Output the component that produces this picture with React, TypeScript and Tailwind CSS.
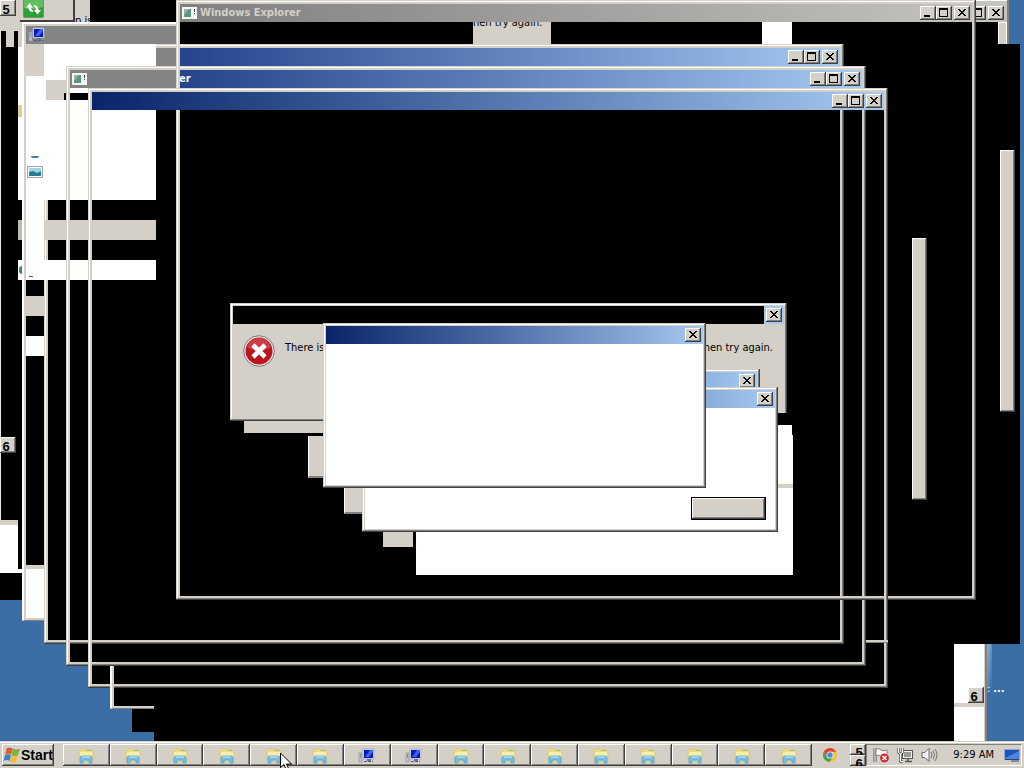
import type { ReactNode } from "react";

const raised =
  "bg-[#d4d0c8] shadow-[inset_-1px_-1px_#404040,inset_1px_1px_#ffffff,inset_-2px_-2px_#808080]";
const frame =
  "shadow-[inset_-1px_-1px_#404040,inset_1px_1px_#d4d0c8,inset_-2px_-2px_#808080,inset_2px_2px_#ffffff,inset_0_0_0_4px_#d4d0c8]";
const dialogFrame =
  "shadow-[inset_-1px_-1px_#404040,inset_1px_1px_#d4d0c8,inset_-2px_-2px_#808080,inset_2px_2px_#ffffff,inset_0_0_0_3px_#d4d0c8]";

function Patch({ className, children }: { className: string; children?: ReactNode }) {
  return <div className={`absolute ${className}`}>{children}</div>;
}

function CaptionButton({ kind }: { kind: "min" | "max" | "close" }) {
  const label = { min: "Minimize", max: "Maximize", close: "Close" }[kind];
  return (
    <button aria-label={label} className={`h-[14px] w-4 shrink-0 ${raised}`}>
      <svg viewBox="0 0 16 14" className="block h-[14px] w-4" shapeRendering="crispEdges" aria-hidden="true">
        {kind === "min" && <path d="M4 9h6v2H4z" fill="#000" />}
        {kind === "max" && <path d="M3 2h9v9H3zM4 4v6h7V4z" fill="#000" fillRule="evenodd" />}
        {kind === "close" && (
          <path
            d="M4 3h2v1h1v1h2V4h1V3h2v1h-1v1h-1v1H9v1h1v1h1v1h1v1h-2V9H9V8H7v1H6v1H4V9h1V8h1V7h1V6H6V5H5V4H4z"
            fill="#000"
          />
        )}
      </svg>
    </button>
  );
}

function CaptionButtons() {
  return (
    <div className="ml-auto flex items-center pr-[2px]">
      <CaptionButton kind="min" />
      <CaptionButton kind="max" />
      <div className="w-[2px]" />
      <CaptionButton kind="close" />
    </div>
  );
}

function AppIcon() {
  return (
    <svg viewBox="0 0 15 12" className="h-3 w-[15px] shrink-0" aria-hidden="true">
      <rect width="15" height="12" fill="#f4f6f4" />
      <rect x="2" y="2" width="7" height="8" fill="#5f9484" />
      <path d="M2 2h5L2 8z" fill="#8fb8a5" />
      <path d="M12.500 2v3M12 6.500h1" stroke="#444" />
    </svg>
  );
}

function ComputerIcon() {
  return (
    <svg viewBox="0 0 18 16" className="h-4 w-[18px] shrink-0" aria-hidden="true">
      <path d="M1 5h3v9H1z" fill="#c4cbd0" stroke="#8c969e" strokeWidth=".8" />
      <path d="M2 7h1M2 9h1" stroke="#48525c" />
      <rect x="5" y="1" width="11" height="10" fill="#d5dbe6" stroke="#a5abbb" strokeWidth=".8" />
      <rect x="6" y="2" width="9" height="8" fill="#0a18b8" />
      <path d="M7 9l5-7h3v2l-4 5z" fill="#3e62ee" />
      <path d="M9 11h4v2H9z" fill="#6b7580" />
      <path d="M6 13.500h9" stroke="#505a90" strokeDasharray="3 1" />
    </svg>
  );
}

function FolderIcon() {
  return (
    <svg viewBox="0 0 18 16" className="h-4 w-[18px]" aria-hidden="true">
      <path d="M2 3l1-2h5l1 1h6l1 2v9H2z" fill="#eedb81" stroke="#d8c983" strokeWidth=".8" />
      <path d="M3 4h12v5H3z" fill="#f8eeae" />
      <path d="M10 2h4v1h-4z" fill="#91c77d" />
      <path d="M3 15v-5q0-2 2-2h8q2 0 2 2v5h-3v-2q0-1-1-1H7q-1 0-1 1v2z" fill="#72bee5" stroke="#5a9fc4" strokeWidth=".8" />
      <path d="M5 9h8" stroke="#c8edfc" />
    </svg>
  );
}

function StartFlag() {
  return (
    <svg viewBox="0 0 18 18" className="h-[18px] w-[18px] shrink-0" aria-hidden="true">
      <path d="M3.500 3q3-2 6 0L8.200 8.700q-3-2-6 0z" fill="#e65b26" />
      <path d="M9.900 3.200q3 2 6.600.3L15 9.200q-3 2-6.400 0z" fill="#79b833" />
      <path d="M2 9.200q3-2 6 0L6.600 15q-3-2-6 0z" fill="#3c7fd0" />
      <path d="M8.500 9.700q3 2 6.300 0L13.200 15.500q-3 2-6.200 0z" fill="#f5bd2c" />
      <path d="M3.500 3q3-2 6 0M9.900 3.200q3 2 6.600.3" fill="none" stroke="#8c5a3c" strokeWidth=".7" />
    </svg>
  );
}

function ErrorIcon() {
  return (
    <svg viewBox="0 0 32 32" className="h-8 w-8 shrink-0" aria-hidden="true">
      <circle cx="16" cy="16" r="15.300" fill="#f3e9e7" stroke="#777" strokeWidth="1" />
      <circle cx="16" cy="16" r="13.500" fill="#bb1620" />
      <path d="M4 12a12.500 12.500 0 0 1 24 0q-12 8-24 0z" fill="#d5555a" opacity=".65" />
      <path d="M10 10l12 12M22 10L10 22" stroke="#fff" strokeWidth="4.600" />
    </svg>
  );
}

function RefreshIcon() {
  return (
    <svg viewBox="0 0 21 18" className="h-[18px] w-[21px]" aria-hidden="true">
      <rect x=".5" y="-3" width="20" height="20.500" rx="1" fill="#2ca136" stroke="#6c9869" />
      <path d="M1 0h19v7Q10 11 1 8z" fill="#60bf60" />
      <path d="M6.500 3L3 7.500h2.500q0 4.500 5 4.500l-1-2q-1.500-.500-1.500-2.500H10z" fill="#fff" />
      <path d="M14.500 14.500L18 10h-2.500q0-4.500-5-5l1.200 2.200q1.300.6 1.300 2.800h-2z" fill="#fff" />
    </svg>
  );
}

function ChromeIcon() {
  return (
    <svg viewBox="0 0 16 16" className="h-4 w-4" aria-hidden="true">
      <circle cx="8" cy="8" r="7" fill="#f2c731" />
      <path d="M1.900 4.500A7 7 0 0 1 14.200 4.700H8L4.700 9.700z" fill="#dc4338" />
      <path d="M1.900 4.500A7 7 0 0 0 7.400 15L11 10 5 10z" fill="#45a15a" />
      <circle cx="8" cy="8" r="3.500" fill="#f5f5f5" />
      <circle cx="8" cy="8" r="2.700" fill="#4b86dc" />
    </svg>
  );
}

function ActionFlagIcon() {
  return (
    <svg viewBox="0 0 17 16" className="h-4 w-[17px]" aria-hidden="true">
      <path d="M2 1v14" stroke="#5f5f5f" strokeWidth="3" />
      <path d="M2 1v14" stroke="#fff" />
      <path d="M3 2q3-1 5 1t6 0v7q-4 1-6-1T3 9z" fill="#fff" stroke="#666" strokeWidth=".8" />
      <circle cx="11.500" cy="11" r="4.800" fill="#cf2632" stroke="#eee" strokeWidth=".6" />
      <path d="M9.500 9l4 4M13.500 9l-4 4" stroke="#fff" strokeWidth="1.500" />
    </svg>
  );
}

function NetworkIcon() {
  return (
    <svg viewBox="0 0 17 16" className="h-4 w-[17px]" aria-hidden="true">
      <rect x="5.500" y="3.500" width="10" height="8" fill="#9b9b98" stroke="#555" />
      <rect x="6.500" y="4.500" width="8" height="6" fill="none" stroke="#eee" />
      <path d="M8 14.500h7M11 12v2" stroke="#555" strokeWidth="1.500" />
      <path d="M1.500 1v4q0 1.500 2 1.500t2-1.500V1M3.500 7v7.500H6" fill="none" stroke="#555" strokeWidth="2.400" />
      <path d="M1.500 1v4q0 1.500 2 1.500t2-1.500V1M3.500 7v7.500H6" fill="none" stroke="#fff" />
    </svg>
  );
}

function SpeakerIcon() {
  return (
    <svg viewBox="0 0 17 16" className="h-4 w-[17px]" aria-hidden="true">
      <path d="M1 5.500h3L8 1.500v13l-4-4H1z" fill="#fff" stroke="#666" />
      <path d="M10 5q2 3 0 6M12 3.500q3 4.500 0 9M14 2q4 6 0 12" fill="none" stroke="#777" />
    </svg>
  );
}

function DisplayIcon() {
  return (
    <svg viewBox="0 0 16 14" className="h-[14px] w-4" aria-hidden="true">
      <rect x=".5" y="1.500" width="15" height="10" fill="#1d52bd" stroke="#8fa9d1" />
      <path d="M1 10L15 3v8H1z" fill="#4687e4" />
      <path d="M1 11.500h14M7 13h8" stroke="#34435f" />
    </svg>
  );
}

function PictureIcon() {
  return (
    <svg viewBox="0 0 16 12" className="h-3 w-4" aria-hidden="true">
      <rect x=".5" y=".5" width="15" height="11" fill="#fff" stroke="#9aa5aa" />
      <rect x="2" y="2" width="12" height="8" fill="#a3d4e8" />
      <path d="M2 6l4-1 4 2 4-2v5H2z" fill="#287d91" />
    </svg>
  );
}

function NumberKey({ n }: { n: string }) {
  return (
    <button
      className={`flex h-4 w-4 items-center justify-center overflow-hidden pt-[3px] pr-1 font-['Liberation_Sans',sans-serif] text-[13px] leading-4 font-bold text-black ${raised}`}
    >
      {n}
    </button>
  );
}

function TrayKey({ n }: { n: string }) {
  return (
    <button
      className={`flex h-[11px] w-4 items-start justify-center overflow-hidden pt-[2px] pl-[2px] font-['Liberation_Sans',sans-serif] text-[13px] leading-[14px] font-bold text-black ${raised}`}
    >
      {n}
    </button>
  );
}

function Dialog({
  className,
  barClass,
  children,
}: {
  className: string;
  barClass: string;
  children?: ReactNode;
}) {
  return (
    <section className={`absolute flex flex-col p-[3px] ${dialogFrame} ${className}`}>
      <header className={`flex h-[18px] shrink-0 items-center justify-end pr-[2px] ${barClass}`}>
        <CaptionButton kind="close" />
      </header>
      {children}
    </section>
  );
}

const tasks = [
  "folder", "folder", "folder", "folder", "folder", "folder", "computer", "computer",
  "folder", "folder", "folder", "folder", "folder", "folder", "folder", "folder",
];

function Backdrop() {
  return (
    <>
      <Patch className="top-0 left-0 h-[600px] w-[1009px] bg-black" />
      <Patch className="top-[44px] left-[177px] h-[600px] w-[843px] bg-black" />
      <Patch className="top-[600px] left-[44px] h-[43px] w-[133px] bg-black" />
      <Patch className="top-[643px] left-[66px] h-[22px] w-[888px] bg-black" />
      <Patch className="top-[665px] left-[88px] h-[22px] w-[866px] bg-black" />
      <Patch className="top-[687px] left-[110px] h-[22px] w-[844px] bg-black" />
      <Patch className="top-[709px] left-[132px] h-[23px] w-[822px] bg-black" />
      <Patch className="top-[732px] bottom-0 left-[154px] w-[800px] bg-black" />
    </>
  );
}

function LeftFragments() {
  return (
    <>
      <Patch className="top-0 left-0 h-[31px] w-[90px] bg-[#d4d0c8]" />
      <Patch className="top-[31px] left-0 h-[490px] w-px bg-[#e8e6e2]" />
      <Patch className="top-[31px] left-[6px] h-4 w-2 bg-[#d4d0c8]" />
      <Patch className="top-[31px] left-[18px] h-4 w-1 bg-[#d4d0c8]" />
      <Patch className="top-0 left-0">
        <NumberKey n="5" />
      </Patch>
      <Patch className="top-0 left-[20px] h-[22px] w-[55px] border-r-2 border-b-2 border-[#404040] bg-[#d4d0c8] pl-[3px]">
        <RefreshIcon />
      </Patch>
      <Patch className="top-[14px] left-[75px] h-2 w-[15px] overflow-hidden text-[11px] leading-[14px] whitespace-nowrap">
        p is
      </Patch>

      <Patch className="top-[47px] left-[18px] flex w-1 flex-col">
        <div className="h-[58px] bg-white" />
        <div className="h-3 bg-[#d9d391]" />
        <div className="h-[83px] bg-white" />
        <div className="h-5" />
        <div className="h-5 bg-[#bdbab4]" />
        <div className="h-5" />
        <div className="flex h-5 flex-col items-end justify-center bg-white">
          <div className="h-2 w-[3px] rounded-l-full bg-[#3a8a80]" />
        </div>
      </Patch>

      <Patch className="top-[437px] left-0">
        <NumberKey n="6" />
      </Patch>
      <Patch className="top-[520px] left-0 h-[53px] w-[18px] border-t-[5px] border-[#d4d0c8] bg-white" />
      <Patch className="top-[569px] left-[18px] h-1 w-1 bg-white" />

      <Patch className="top-[44px] left-[44px] flex w-[112px] flex-col">
        <div className="h-[36px] bg-white" />
        <div className="flex h-5 bg-white pl-[2px]">
          <div className="w-5 bg-[#d4d0c8]" />
        </div>
        <div className="h-[100px] bg-white" />
        <div className="h-5" />
        <div className="h-5 bg-[#d4d0c8]" />
        <div className="h-5" />
        <div className="h-5 bg-white" />
      </Patch>
      <Patch className="top-[93px] left-[64px] h-[7px] w-6 bg-black" />

      <Patch className="top-[22px] left-[22px] flex h-[22px] w-[154px] border-t-2 border-l-2 border-white bg-[#d4d0c8] pt-[2px] pl-[2px]">
        <div className="flex flex-1 items-center bg-[#848484] pl-[2px]">
          <ComputerIcon />
        </div>
      </Patch>
      <Patch className="top-[44px] left-[22px] flex h-[577px] w-[22px] border-b border-l-2 border-b-[#808080] border-l-white">
        <div className="w-[2px] bg-[#d4d0c8]" />
        <div className="flex flex-1 flex-col">
          <div className="h-8 bg-[#d4d0c8]" />
          <div className="flex h-[204px] flex-col items-center bg-white pt-[80px]">
            <div className="h-[2px] w-2 rounded-b-full bg-[#3a7ea0]" />
            <div className="pt-2">
              <PictureIcon />
            </div>
            <div className="mt-[98px] mr-2 h-px w-1 bg-[#555]" />
          </div>
          <div className="h-4 bg-black" />
          <div className="h-5 bg-[#d4d0c8]" />
          <div className="h-5 bg-black" />
          <div className="h-5 bg-white" />
          <div className="h-[209px] bg-black" />
          <div className="h-1 bg-[#d4d0c8]" />
          <div className="flex-1 border-b-2 border-[#d4d0c8] bg-white" />
        </div>
      </Patch>
    </>
  );
}

function ExplorerWindows() {
  return (
    <>
      <section className={`absolute top-[44px] left-[44px] h-[600px] w-[800px] p-1 ${frame}`}>
        <header className="flex h-[18px]">
          <div className="w-[129px] bg-[#848484]" />
          <div className="flex flex-1 items-center bg-linear-to-r from-[#25438c] to-[#a6caf0]">
            <CaptionButtons />
          </div>
        </header>
      </section>
      <LeftFragments />

      <section className={`absolute top-[66px] left-[66px] h-[600px] w-[800px] p-1 ${frame}`}>
        <header className="flex h-[18px]">
          <div className="flex w-[109px] items-center bg-[#848484] pl-[2px]">
            <AppIcon />
          </div>
          <div className="flex flex-1 items-center bg-linear-to-r from-[#25438c] to-[#a6caf0]">
            <h2 className="text-[11px] leading-[18px] font-bold text-white">er</h2>
            <CaptionButtons />
          </div>
        </header>
      </section>

      <Patch className="top-0 left-[975px] flex h-[44px] w-[34px] flex-col border-r-2 border-[#808080] bg-black">
        <div className="flex h-[22px] items-center justify-end overflow-hidden border-t border-white bg-[#c6c4c0] pt-[3px] pr-[3px]">
          <CaptionButton kind="max" />
          <div className="w-[2px] shrink-0" />
          <CaptionButton kind="close" />
        </div>
        <div className="ml-auto w-[9px] flex-1 border-t border-r border-l border-white bg-[#d4d0c8]" />
      </Patch>
      <Patch className="top-[22px] left-[473px] h-[22px] w-[78px] overflow-hidden bg-[#d4d0c8] text-[11px] leading-[14px] text-black">
        <p className="-mt-[6px]">hen try again.</p>
      </Patch>
      <Patch className="top-[22px] left-[762px] h-[22px] w-[30px] bg-white" />

      <section className={`absolute top-0 left-[176px] h-[600px] w-[800px] p-1 ${frame}`}>
        <header className="flex h-[18px] items-center bg-linear-to-r from-[#808080] to-[#c4c2be] pl-[2px]">
          <AppIcon />
          <h1 className="pl-[3px] text-[11px] leading-[18px] font-bold text-[#d4d0c8]">Windows Explorer</h1>
          <CaptionButtons />
        </header>
      </section>

      <section className={`absolute top-[88px] left-[88px] h-[600px] w-[800px] p-1 ${frame}`}>
        <header className="flex h-[18px] items-center bg-linear-to-r from-[#0a246a] to-[#a6caf0]">
          <CaptionButtons />
        </header>
      </section>
      <Patch className="top-[640px] left-[866px] h-[3px] w-[22px] border-b border-[#808080] bg-[#d4d0c8]" />
      <Patch className="top-[666px] left-[110px] h-[43px] w-[44px] border-b border-l-2 border-b-[#808080] border-l-white">
        <div className="h-full border-b-2 border-l-2 border-[#d4d0c8]" />
      </Patch>
    </>
  );
}

function Dialogs() {
  return (
    <>
      <Dialog className="top-[303px] left-[230px] h-[118px] w-[557px] bg-[#d4d0c8]" barClass="bg-linear-to-r from-black from-[531px] to-[#a6caf0] to-[531px]">
        <div className="flex pt-[11px] pr-[11px] pl-[10px]">
          <ErrorIcon />
          <p className="pt-[6px] pl-[10px] text-[11px] leading-[14px] text-black">There is</p>
          <p className="ml-auto pt-[6px] text-[11px] leading-[14px] text-black">hen try again.</p>
        </div>
      </Dialog>
      <Patch className="top-[413px] left-[700px] h-2 w-[87px] bg-black" />
      <Patch className="top-[421px] left-[244px] h-3 w-[80px] bg-[#d4d0c8]" />
      <Patch className="top-[436px] left-[308px] h-[42px] w-4 border-b-2 border-l border-b-[#808080] border-l-white bg-[#d4d0c8]" />
      <Patch className="top-[480px] left-[344px] h-[34px] w-5 border-b-2 border-l border-b-[#808080] border-l-white bg-[#d4d0c8]" />
      <Patch className="top-[530px] left-[383px] h-[17px] w-[30px] bg-[#d4d0c8]" />
      <Patch className="top-[530px] left-[416px] h-[45px] w-[377px] bg-white" />
      <Patch className="top-[425px] left-[770px] h-[10px] w-[22px] bg-white" />
      <Patch className="top-[435px] left-[770px] h-[95px] w-[23px] bg-white">
        <div className="mt-[49px] h-1 bg-[#d4d0c8]" />
      </Patch>
      <Dialog className="top-[369px] left-[600px] h-[30px] w-[160px]" barClass="bg-linear-to-r from-[#5d88c6] to-[#a6caf0]" />
      <Dialog className="top-[387px] left-[362px] h-[145px] w-[416px] bg-white" barClass="bg-linear-to-r from-[#0a246a] to-[#a6caf0]">
        <div className="mt-auto flex justify-end pr-[9px] pb-[9px]">
          <button
            aria-label="OK"
            className="h-[23px] w-[75px] border border-black bg-[#d4d0c8] shadow-[inset_-1px_-1px_#404040,inset_1px_1px_#ffffff,inset_-2px_-2px_#808080]"
          />
        </div>
      </Dialog>
      <Dialog className="top-[323px] left-[323px] h-[165px] w-[383px] bg-white" barClass="bg-linear-to-r from-[#0a246a] to-[#a6caf0]" />
    </>
  );
}

function Taskbar() {
  return (
    <footer className="relative flex h-[27px] shrink-0 items-stretch border-t border-[#d4d0c8] bg-[#d4d0c8] pt-[2px] pr-[2px] pb-[2px] pl-[2px] shadow-[inset_0_1px_#ffffff]">
      <button className={`flex w-[52px] shrink-0 items-center pl-px text-[14px] font-bold text-black ${raised}`}>
        <StartFlag />
        <span className="font-['Liberation_Sans_Narrow','Liberation_Sans',sans-serif]">Start</span>
      </button>
      <nav aria-label="Open windows" className="ml-[9px] flex min-w-0 flex-1">
        {tasks.map((t, i) => (
          <button
            key={i}
            aria-label={t === "folder" ? "Windows Explorer" : "Computer"}
            className={`flex flex-1 items-center justify-center pt-[2px] ${raised}`}
          >
            {t === "folder" ? <FolderIcon /> : <ComputerIcon />}
          </button>
        ))}
      </nav>
      <div className="flex w-[54px] shrink-0 items-center justify-between pl-[10px]">
        <ChromeIcon />
        <div className="flex flex-col">
          <TrayKey n="5" />
          <TrayKey n="6" />
        </div>
      </div>
      <div className="flex w-[156px] shrink-0 items-center border border-t-[#808080] border-r-white border-b-white border-l-[#808080] pl-[6px]">
        <ActionFlagIcon />
        <div className="pl-[7px]">
          <NetworkIcon />
        </div>
        <div className="pl-[7px]">
          <SpeakerIcon />
        </div>
        <time className="ml-auto text-[11px] leading-[14px] whitespace-nowrap text-black">9:29 AM</time>
        <div className="pr-px pl-[10px]">
          <DisplayIcon />
        </div>
      </div>
    </footer>
  );
}

export default function App() {
  return (
    <div className="relative flex h-screen flex-col overflow-hidden bg-[#3b6ea5] font-['DejaVu_Sans_Condensed','Noto_Sans',sans-serif]">
      <main className="relative min-h-0 flex-1 overflow-hidden">
        <Backdrop />
        <ExplorerWindows />
        <Patch className={`top-[150px] left-[1000px] h-[262px] w-[15px] ${raised}`} />
        <Patch className={`top-[238px] left-[912px] h-[262px] w-[15px] ${raised}`} />
        <Dialogs />
        <Patch className="top-[644px] bottom-0 left-[954px] flex w-[33px] flex-col border-r-2 border-[#808080] bg-white">
          <div className="flex flex-1 flex-col border-r border-[#d4d0c8]">
            <div className="mt-[43px] flex justify-end">
              <NumberKey n="6" />
            </div>
            <div className="h-1 bg-[#d4d0c8]" />
          </div>
        </Patch>
        <Patch className="top-[644px] left-[987px] h-[44px] w-[5px] bg-linear-to-br from-[#8db0d0] to-[#3b6ea5]" />
        <Patch className="top-[682px] left-[987px] flex gap-[3px] text-[11px] leading-[14px] text-white">
          <span>:</span>
          <span className="font-bold">...</span>
        </Patch>
      </main>
      <Taskbar />
      <svg viewBox="0 0 12 19" className="absolute top-[752px] left-[280px] h-[19px] w-3" aria-hidden="true">
        <path d="M.5 1v14.500l3.500-3 2.500 6 2.500-1-2.500-5.500h5z" fill="#fff" stroke="#000" />
      </svg>
    </div>
  );
}
